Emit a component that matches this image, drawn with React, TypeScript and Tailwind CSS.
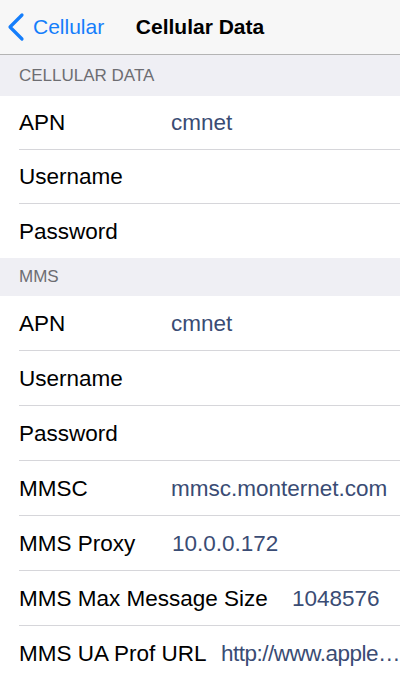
const sans = "font-['Helvetica_Neue','Liberation_Sans',Arial,sans-serif]";

type Row = { label: string; value?: string; valueX?: number; tight?: boolean };

const cellular: Row[] = [
  { label: "APN", value: "cmnet", valueX: 171 },
  { label: "Username" },
  { label: "Password" },
];

const mms: Row[] = [
  { label: "APN", value: "cmnet", valueX: 171 },
  { label: "Username" },
  { label: "Password" },
  { label: "MMSC", value: "mmsc.monternet.com", valueX: 171 },
  { label: "MMS Proxy", value: "10.0.0.172", valueX: 172 },
  { label: "MMS Max Message Size", value: "1048576", valueX: 292 },
  { label: "MMS UA Prof URL", value: "http://www.apple…", valueX: 221, tight: true },
];

function SettingRow({ row, height, last }: { row: Row; height: string; last?: boolean }) {
  return (
    <div className={`bg-white pl-[19px] ${height}`}>
      <div
        className={`flex h-full items-center pt-[1px] ${last ? "" : "border-b border-[#d6d6da]"}`}
      >
        <span
          className="shrink-0 whitespace-nowrap text-[22.5px] text-black"
          style={row.valueX ? { width: row.valueX - 19 } : undefined}
        >
          {row.label}
        </span>
        {row.value && (
          <span
            className={`whitespace-nowrap text-[22.5px] text-[#3a4c74] ${
              row.tight ? "tracking-[-0.5px]" : ""
            }`}
          >
            {row.value}
          </span>
        )}
      </div>
    </div>
  );
}

function SectionHeader({ title, height }: { title: string; height: string }) {
  return (
    <div className={`flex items-center bg-[#efeff4] pl-[19px] ${height}`}>
      <span className="text-[17px] text-[#6d6d72]">{title}</span>
    </div>
  );
}

export default function App() {
  return (
    <div className={`h-[687px] w-[404px] overflow-hidden bg-white ${sans}`}>
      <div className="w-[400px]">
        <div className="grid h-[55px] grid-cols-[1fr_auto_1fr] items-center border-b border-[#b4b4b4] bg-[#f7f7f7]">
          <div className="flex items-center text-[#157efb]">
            <svg width="30" height="30" viewBox="0 0 30 30" className="ml-[5px]" fill="none">
              <path
                d="M17 3 L5 15 L17 27"
                stroke="currentColor"
                strokeWidth="3.2"
                strokeLinecap="round"
                strokeLinejoin="round"
              />
            </svg>
            <span className="-ml-[2px] text-[21px]">Cellular</span>
          </div>
          <span className="text-[21px] font-bold text-black">Cellular Data</span>
          <div />
        </div>

        <SectionHeader title="CELLULAR DATA" height="h-[41px]" />
        {cellular.map((r, i) => (
          <SettingRow key={"c" + i} row={r} height="h-[54px]" last={i === cellular.length - 1} />
        ))}

        <SectionHeader title="MMS" height="h-[38px]" />
        {mms.map((r, i) => (
          <SettingRow key={"m" + i} row={r} height="h-[55px]" last={i === mms.length - 1} />
        ))}
      </div>
    </div>
  );
}
